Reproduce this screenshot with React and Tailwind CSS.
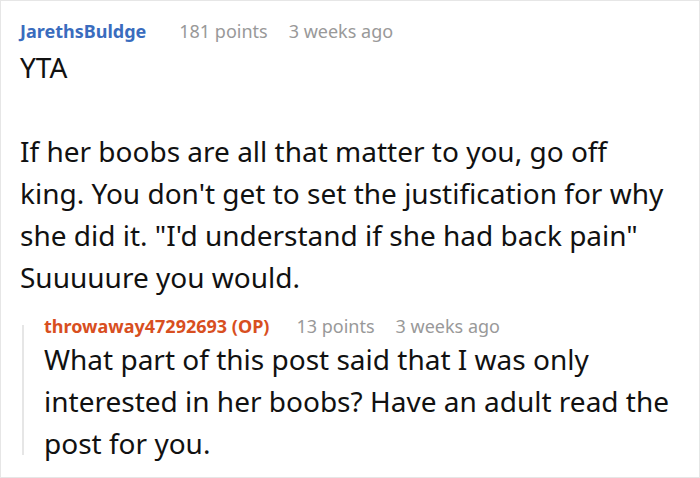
import React from "react";

const font = { fontFamily: '"Noto Sans", "Open Sans", sans-serif' };

function Meta({ name, nameClass, points, time, gap }) {
  return (
    <div className="flex items-baseline text-[18px] leading-[24px]">
      <span className={`font-bold ${nameClass}`}>{name}</span>
      <span className={`${gap} text-[#999]`}>{points}</span>
      <span className="ml-[21px] text-[#999]">{time}</span>
    </div>
  );
}

export default function App() {
  return (
    <div style={font} className="w-[700px] h-[478px] overflow-hidden bg-white border border-[#e6e6e6] pl-[19px] pr-[27px] pt-[18px]">
      <Meta name="JarethsBuldge" nameClass="text-[#3a6cbe]" gap="ml-[33px]" points="181 points" time="3 weeks ago" />
      <div className="mt-[3px] text-[28px] leading-[42px] text-[#111]">
        <p>YTA</p>
        <p className="mt-[42px]">
          If her boobs are all that matter to you, go off king. You don't get to set the justification for why she did it. "I'd understand if she had back pain" Suuuuure you would.
        </p>
      </div>
      <div className="mt-[16px] ml-[2px] flex">
        <div className="w-[2px] shrink-0 bg-[#e6e6e6] mt-[11px] mb-[9px]" />
        <div className="pl-[20px]">
          <Meta name="throwaway47292693 (OP)" nameClass="text-[#d84f1f]" gap="ml-[27px]" points="13 points" time="3 weeks ago" />
          <p className="text-[28px] leading-[42px] text-[#111]">
            What part of this post said that I was only interested in her boobs? Have an adult read the post for you.
          </p>
        </div>
      </div>
    </div>
  );
}
